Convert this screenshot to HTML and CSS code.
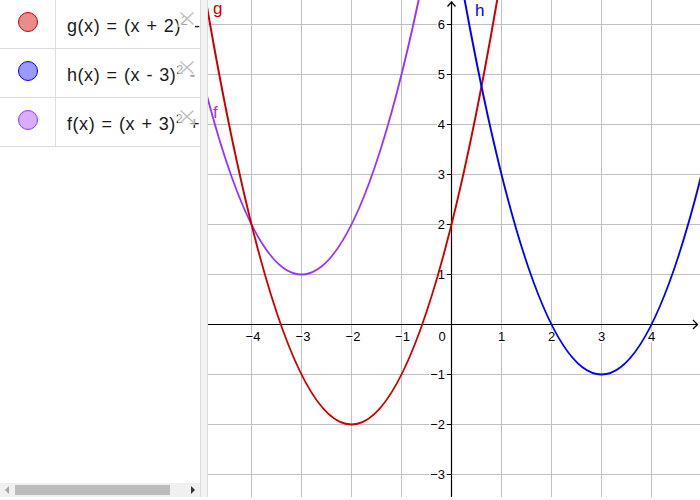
FILE: index.html
```html
<!DOCTYPE html>
<html>
<head>
<meta charset="utf-8">
<link rel="stylesheet" href="styles.css">
</head>
<body>
<div class="app">
  <aside class="algebra">
    <div class="rows">
      <div class="row">
        <div class="marker"><span class="dot dot-g"></span></div>
        <div class="expr">g(x) = (x + 2)<sup>2</sup> - 2</div>
        <span class="del"><svg width="16" height="15" viewBox="0 0 16 15"><path d="M1.5 1.5 L14.5 13.5 M14.5 1.5 L1.5 13.5"/></svg></span>
      </div>
      <div class="row">
        <div class="marker"><span class="dot dot-h"></span></div>
        <div class="expr">h(x) = (x - 3)<sup>2</sup> - 1</div>
        <span class="del"><svg width="16" height="15" viewBox="0 0 16 15"><path d="M1.5 1.5 L14.5 13.5 M14.5 1.5 L1.5 13.5"/></svg></span>
      </div>
      <div class="row">
        <div class="marker"><span class="dot dot-f"></span></div>
        <div class="expr">f(x) = (x + 3)<sup>2</sup> + 1</div>
        <span class="del"><svg width="16" height="15" viewBox="0 0 16 15"><path d="M1.5 1.5 L14.5 13.5 M14.5 1.5 L1.5 13.5"/></svg></span>
      </div>
    </div>
    <div class="hscroll">
      <span class="sbtn"><svg width="15" height="14" viewBox="0 0 15 14"><path class="arrow-off" d="M5 7 L9 3 L9 11 Z"/></svg></span>
      <div class="track"><div class="thumb"></div></div>
      <span class="sbtn"><svg width="15" height="14" viewBox="0 0 15 14"><path class="arrow-on" d="M6 3 L10 7 L6 11 Z"/></svg></span>
    </div>
  </aside>
  <div class="splitter"></div>
  <main class="graphics">
    <svg class="plot" width="492" height="497" viewBox="208 0 492 497">
      <g class="grid">
        <path d="M251.5 0 V497 M301.5 0 V497 M351.5 0 V497 M401.5 0 V497 M501.5 0 V497 M551.5 0 V497 M601.5 0 V497 M651.5 0 V497"/>
        <path d="M208 24.5 H700 M208 74.5 H700 M208 124.5 H700 M208 174.5 H700 M208 224.5 H700 M208 274.5 H700 M208 374.5 H700 M208 424.5 H700 M208 474.5 H700"/>
      </g>
      <g class="ticklabels">
        <text x="445" y="29" text-anchor="end">6</text>
        <text x="445" y="79" text-anchor="end">5</text>
        <text x="445" y="129" text-anchor="end">4</text>
        <text x="445" y="179" text-anchor="end">3</text>
        <text x="445" y="229" text-anchor="end">2</text>
        <text x="445" y="279" text-anchor="end">1</text>
        <text x="445" y="379" text-anchor="end">−1</text>
        <text x="445" y="429" text-anchor="end">−2</text>
        <text x="445" y="479" text-anchor="end">−3</text>
        <text x="253" y="341" text-anchor="middle">−4</text>
        <text x="303" y="341" text-anchor="middle">−3</text>
        <text x="353" y="341" text-anchor="middle">−2</text>
        <text x="402.5" y="341" text-anchor="middle">−1</text>
        <text x="442" y="341" text-anchor="middle">0</text>
        <text x="501.5" y="341" text-anchor="middle">1</text>
        <text x="551.5" y="341" text-anchor="middle">2</text>
        <text x="601.5" y="341" text-anchor="middle">3</text>
        <text x="651.5" y="341" text-anchor="middle">4</text>
      </g>
      <g class="axes">
        <path d="M208 324.5 H697 M451.5 1.5 V497"/>
        <path d="M447 24.5 H451 M447 74.5 H451 M447 124.5 H451 M447 174.5 H451 M447 224.5 H451 M447 274.5 H451 M447 374.5 H451 M447 424.5 H451 M447 474.5 H451"/>
        <path class="arrowhead" d="M447.5 6.5 L451.5 2 L455.5 6.5"/>
        <path class="arrowhead" d="M693 320 L697.5 324.5 L693 329"/>
      </g>
      <g class="curves">
        <path class="curve-f" d="M151.5 -175.5 Q301.5 724.5 451.5 -175.5"/>
        <path class="curve-g" d="M201.5 -25.5 Q351.5 874.5 501.5 -25.5"/>
        <path class="curve-h" d="M451.5 -75.5 Q601.5 824.5 751.5 -75.5"/>
      </g>
      <g class="names">
        <text class="name-g" x="213" y="14">g</text>
        <text class="name-h" x="475" y="16">h</text>
        <text class="name-f" x="213" y="118">f</text>
      </g>
    </svg>
  </main>
</div>
</body>
</html>
```
FILE: styles.css
```css
html, body {
  margin: 0;
  padding: 0;
  background: #ffffff;
  width: 700px;
  height: 500px;
  overflow: hidden;
}

.app {
  display: flex;
  width: 700px;
  height: 497px;
  font-family: "Liberation Sans", Arial, sans-serif;
  color: #222;
}

.algebra {
  width: 200px;
  display: flex;
  flex-direction: column;
  background: #fff;
}

.rows {
  flex: 1;
  display: flex;
  flex-direction: column;
}

.row {
  position: relative;
  display: flex;
  height: 48px;
  border-bottom: 1px solid #dddddd;
}

.marker {
  width: 56px;
  border-right: 1px solid #dddddd;
  display: flex;
  justify-content: center;
  padding-top: 12px;
  box-sizing: border-box;
}

.dot {
  width: 18px;
  height: 18px;
  border-radius: 50%;
  border: 1px solid;
}

.dot-g { background: #e88c8c; border-color: #cc0000; }
.dot-h { background: #9999ff; border-color: #0000ff; }
.dot-f { background: #d6adff; border-color: #9933ff; }

.expr {
  flex: 1;
  padding: 16px 0 0 11px;
  font-size: 18px;
  line-height: 20px;
  letter-spacing: 0.55px;
  word-spacing: 0.8px;
  white-space: nowrap;
  overflow: hidden;
  color: #1a1a1a;
}

.expr sup {
  font-size: 12px;
  vertical-align: 7px;
  line-height: 0;
  letter-spacing: 0;
}

.del {
  position: absolute;
  left: 178px;
  top: 10px;
  width: 17px;
  height: 17px;
  background: rgba(255, 255, 255, 0.6);
  display: flex;
  align-items: center;
  justify-content: center;
}

.del path {
  stroke: #c2c2c2;
  stroke-width: 1.6;
  fill: none;
}

.hscroll {
  height: 14px;
  display: flex;
  background: #f0f0f0;
}

.sbtn {
  width: 15px;
  height: 14px;
  display: block;
}

.sbtn svg { display: block; }

.arrow-off { fill: #a3a3a3; }
.arrow-on { fill: #333333; }

.track {
  flex: 1;
  padding: 2px 0;
  display: flex;
}

.thumb {
  width: 155px;
  height: 10px;
  background: #bcbcbc;
}

.splitter {
  width: 6px;
  background: #f3f3f3;
  border-left: 1px solid #dcdcdc;
  border-right: 1px solid #dcdcdc;
}

.graphics {
  flex: 1;
  display: block;
  overflow: hidden;
}

.plot { display: block; }

.grid path {
  stroke: #c0c0c0;
  stroke-width: 1;
  fill: none;
}

.axes path {
  stroke: #000;
  stroke-width: 1.2;
  fill: none;
}

.axes .arrowhead {
  stroke-width: 1.3;
}

.ticklabels text {
  font-family: "Liberation Sans", Arial, sans-serif;
  font-size: 13px;
  fill: #000;
  stroke: #fff;
  stroke-width: 3px;
  paint-order: stroke;
}

.curves path {
  fill: none;
  stroke-width: 2;
}

.curve-g { stroke: #cc0000; }
.curve-h { stroke: #0000ff; }
.curve-f { stroke: #9933ff; }

.names text {
  font-family: "Liberation Sans", Arial, sans-serif;
  font-size: 17px;
}

.name-g { fill: #cc0000; }
.name-h { fill: #0000ff; }
.name-f { fill: #9933ff; }
```
